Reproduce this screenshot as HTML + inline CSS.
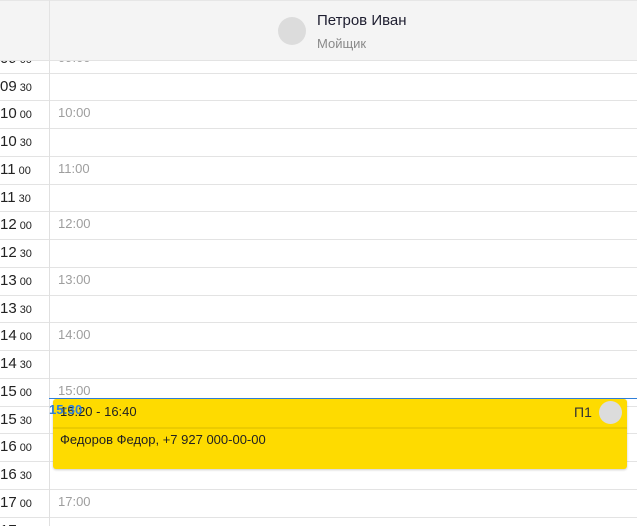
<!DOCTYPE html><html><head><meta charset="utf-8"><style>
html,body{margin:0;width:637px;height:526px;overflow:hidden}
body{background:#fff;font-family:"Liberation Sans",sans-serif;position:relative}
.a{position:absolute}
.hl{left:0;width:637px;height:1px;background:#e3e3e3}
.lb{left:0;width:49px;font-size:15px;color:#222;line-height:16px}
.lb small{font-size:11px;margin-left:3px}
.tl{left:58px;font-size:13px;color:#9e9e9e;line-height:14px}
</style></head><body>
<div id="g"></div>
<div class="a" style="left:49px;top:0;width:1px;height:526px;background:#e0e0e0"></div>
<div class="a" style="left:0;top:0;width:637px;height:61px;background:#f4f4f4;border-bottom:1px solid #e3e3e3;border-top:1px solid #e6e6e6;box-sizing:border-box"></div>
<div class="a" style="left:49px;top:0;width:1px;height:61px;background:#e3e3e3"></div>
<div class="a" style="left:278px;top:17px;width:28px;height:28px;border-radius:50%;background:#dcdcdc"></div>
<div class="a" style="left:317px;top:12px;font-size:15px;color:#1e1e30">Петров Иван</div>
<div class="a" style="left:317px;top:36px;font-size:13px;color:#8a8a8a">Мойщик</div>
<div class="a" style="left:49px;top:398px;width:588px;height:1px;background:#2f7fd9"></div>
<div class="a" style="left:53px;top:399px;width:574px;height:70px;background:#fedb00;border-radius:3px;box-shadow:0 1px 2px rgba(0,0,0,.2)"></div>
<div class="a" style="left:53px;top:427px;width:574px;height:2px;background:#eccb00"></div>
<div class="a" style="left:60px;top:404px;font-size:13px;color:#222">15:20 - 16:40</div>
<div class="a" style="left:49px;top:402px;font-size:13px;color:#2f7fd9;font-weight:bold">15:30</div>
<div class="a" style="left:574px;top:404px;font-size:14px;color:#333">П1</div>
<div class="a" style="left:599px;top:401px;width:23px;height:23px;border-radius:50%;background:#dcdcdc"></div>
<div class="a" style="left:60px;top:432px;font-size:13px;color:#222">Федоров Федор, +7 927 000-00-00</div>
<script>
var g=document.getElementById('g'),h='';
for(var k=-1;k<17;k++){var y=72.5+27.75*k;h+='<div class="a hl" style="top:'+Math.round(y)+'px"></div>';
var tot=570+30*k,hh=Math.floor(tot/60),mm=tot%60,hs=(hh<10?'0':'')+hh,ms=mm?'30':'00';
var ty=Math.round(y+6);
h+='<div class="a lb" style="top:'+ty+'px">'+hs+'<small>'+ms+'</small></div>';
if(mm==0&&hh!=16)h+='<div class="a tl" style="top:'+(ty)+'px">'+hs+':00</div>';}
g.innerHTML=h;
</script>
</body></html>
